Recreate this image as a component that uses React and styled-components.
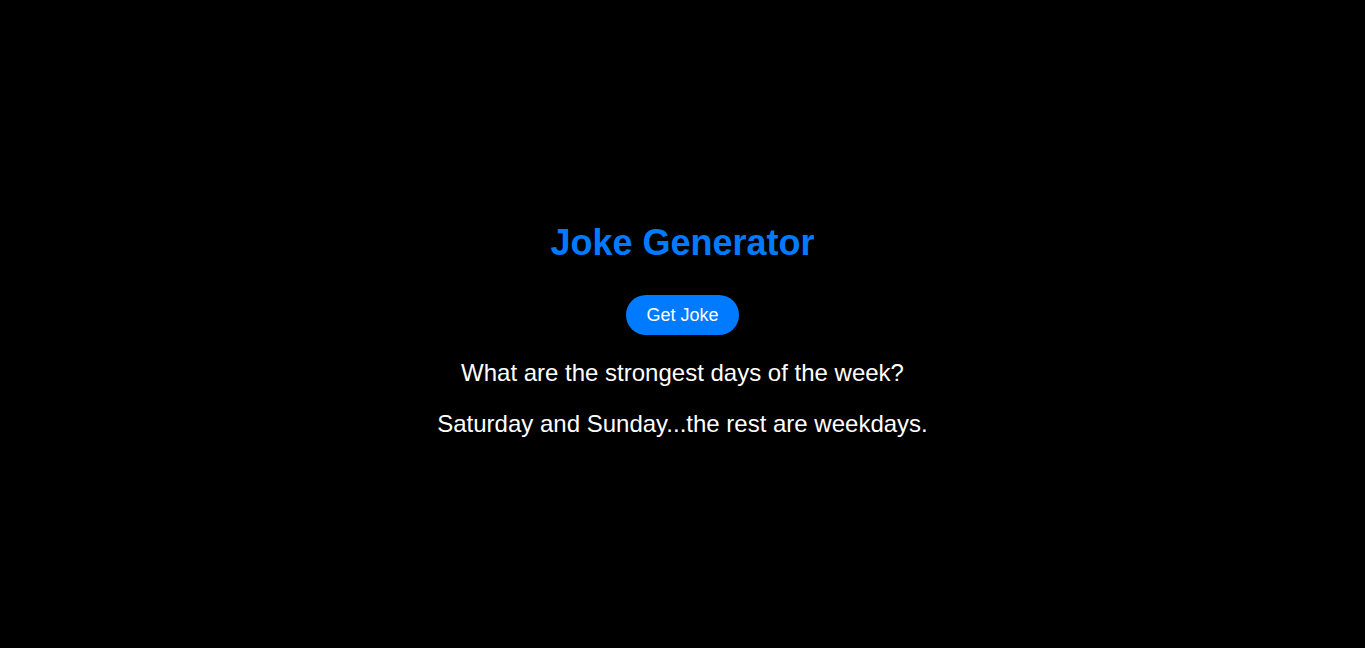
import React from "react";
import styled, { createGlobalStyle } from "styled-components";

const GlobalStyle = createGlobalStyle`
  html, body {
    margin: 0;
    padding: 0;
    background: #000;
  }
  body {
    font-family: "Liberation Sans", Arial, sans-serif;
  }
`;

const App = () => {
  return (
    <>
      <GlobalStyle />
      <Page>
        <Card>
          <Title>Joke Generator</Title>
          <JokeButton>Get Joke</JokeButton>
          <Line>What are the strongest days of the week?</Line>
          <Line>Saturday and Sunday...the rest are weekdays.</Line>
        </Card>
      </Page>
    </>
  );
};

export default App;

const Page = styled.div`
  min-height: 100vh;
  display: flex;
  justify-content: center;
  align-items: center;
  background: #000;
  color: #fff;
`;

const Card = styled.div`
  display: flex;
  flex-direction: column;
  align-items: center;
  text-align: center;
  padding-top: 14px;
`;

const Title = styled.h1`
  margin: 0 0 33px;
  font-size: 36px;
  font-weight: bold;
  line-height: 39px;
  color: #007bff;
`;

const JokeButton = styled.button`
  height: 40px;
  padding: 0 20px;
  border: none;
  border-radius: 20px;
  background: #007bff;
  color: #fff;
  font-family: "Liberation Sans", Arial, sans-serif;
  font-size: 18px;
  cursor: pointer;
`;

const Line = styled.p`
  margin: 23px 0 0;
  font-size: 24px;
  line-height: 30px;
  & + & {
    margin-top: 21px;
  }
`;
